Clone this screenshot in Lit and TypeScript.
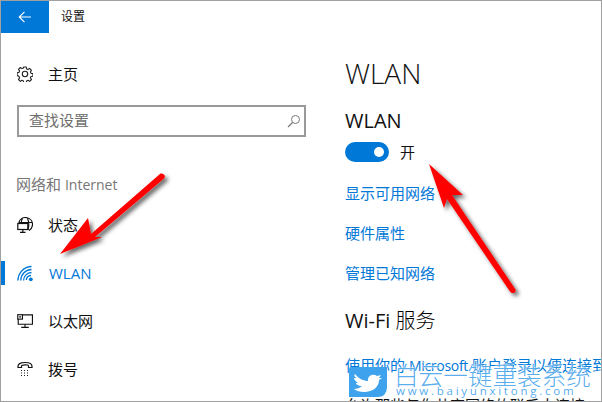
import { LitElement, html, css, svg } from "lit";
import { customElement } from "lit/decorators.js";

const gear = svg`<g fill="none" stroke="#222" stroke-width="1.100"><circle cx="8" cy="8" r="2.700"/><path d="M6.700 1h2.600l.3 1.900 1.400.6 1.600-1.100 1.900 1.900-1.100 1.600.6 1.400 1.900.3v2.600l-1.900.3-.6 1.400 1.100 1.600-1.900 1.900-1.600-1.100-1.400.6-.3 1.900H6.700l-.3-1.900-1.400-.6-1.600 1.100-1.900-1.900 1.100-1.600-.6-1.400L.1 9.300V6.700l1.900-.3.6-1.400-1.100-1.600 1.900-1.900L5 2.600 6.400 2z" stroke-linejoin="round"/></g>`;
const globe = svg`<g fill="none" stroke="#111" stroke-width="1.200"><path d="M2 5A7 7 0 0 1 15.500 8 7 7 0 0 1 12 13.500M1.500 5.500h14M5.500 1.500C4.500 3 4.300 4.500 4.300 6M10.500 1.500C11.800 4 12 9 11 13"/><rect x=".8" y="6.500" width="10" height="6"/><path d="M5.800 12.500v2.500M3 15.300h5.500"/></g>`;
const wifi = svg`<g fill="none" stroke="#0078d7" stroke-width="1.300"><path d="M1 15.500A14 14 0 0 1 14.500 1.500"/><path d="M3.800 15.500A11 11 0 0 1 14.500 4.500"/><path d="M6.600 15.500A8 8 0 0 1 14.500 7.500"/><path d="M9.300 15A5 5 0 0 1 14 10.500"/></g><circle cx="13.800" cy="14.300" r="1.900" fill="#0078d7"/>`;
const eth = svg`<g fill="none" stroke="#111" stroke-width="1.200"><path d="M6 1.500H16.400V11.500H1.300V6"/><rect x=".8" y="1.300" width="5" height="4.700"/><path d="M8.500 11.500v3M4.500 14.800h8"/></g><rect x="2.500" y="2.800" width="1.600" height="1.600" fill="#111"/>`;
const phone = svg`<g fill="none" stroke="#111" stroke-width="1.200"><path d="M1 6.500V5.200C1 3 4 1.500 8 1.500S15 3 15 5.200v1.300h-3.500V5C11.500 4 10 3.800 8 3.800S4.500 4 4.500 5v1.500z"/></g><g fill="#222"><rect x="4" y="9" width="1" height="1"/><rect x="7" y="9" width="1" height="1"/><rect x="10" y="9" width="1" height="1"/><rect x="4" y="11.500" width="1" height="1"/><rect x="7" y="11.500" width="1" height="1"/><rect x="10" y="11.500" width="1" height="1"/><rect x="4" y="14" width="1" height="1"/><rect x="7" y="14" width="1" height="1"/><rect x="10" y="14" width="1" height="1"/></g>`;

@customElement("app-root")
export class AppRoot extends LitElement {
  static styles = css`
    :host { display: block; width: 602px; height: 402px; position: relative; overflow: hidden; background: #fff;
      font-family: "Open Sans", "Noto Sans CJK SC", sans-serif; color: #111; }
    .window { box-sizing: border-box; width: 602px; height: 402px; border: 1px solid #a0a0a0; display: flex; overflow: hidden; background: #fff; }
    .left { width: 344px; flex: none; }
    .bar { display: flex; align-items: center; height: 32px; }
    .back { width: 48px; height: 32px; background: #0078d7; display: flex; align-items: center; justify-content: center; }
    .title { margin-left: 12px; font-size: 12px; margin-bottom: 2px; }
    .row { display: flex; align-items: center; height: 48px; padding-left: 16px; font-size: 15px; position: relative; }
    .row svg { width: 16px; height: 16px; margin-right: 16px; flex: none; }
    .cjk { margin: 0 0 2px -1px; }
    .home { margin-top: 17px; }
    .search { box-sizing: border-box; margin: 7px 39px 0 16px; height: 32px; border: 2px solid #999; display: flex; align-items: center; justify-content: space-between; padding: 0 3px 0 10px; font-size: 15px; color: #6f6f6f; }
    .search span { margin-bottom: 3px; }
    .section { margin: 36px 0 4px 15px; height: 24px; line-height: 22px; font-size: 15px; color: #767676; }
    .section span { font-size: 14px; }
    .active { color: #0078d7; }
    .active::before { content: ""; position: absolute; left: 0; top: 12px; width: 4px; height: 24px; background: #0078d7; }
    .right { flex: 1; min-width: 0; }
    h1 { margin: 49px 0 0; font-weight: 300; font-size: 28px; line-height: 46px; color: #111; }
    h2 { margin: 0; font-weight: 400; font-size: 20px; line-height: 30px; color: #111; }
    .h-wlan { margin-top: 10px; }
    .toggle-row { display: flex; align-items: center; margin-top: 6px; gap: 11px; font-size: 15px; line-height: 20px; }
    .toggle { width: 44px; height: 20px; border-radius: 10px; background: #0078d7; display: flex; align-items: center; justify-content: flex-end; padding-right: 5px; box-sizing: border-box; }
    .knob { width: 10px; height: 10px; border-radius: 50%; background: #fff; }
    .links { margin-top: 11px; display: flex; flex-direction: column; gap: 0; }
    .link { color: #0078d7; font-size: 15px; line-height: 40px; white-space: nowrap; }
    .h-wifi { margin-top: 13px; }
    .h-wifi span { font-weight: 300; color: #000; }
    .para { margin-top: 17px; white-space: nowrap; color: #0078d7; font-size: 15px; line-height: 24px; }
    .para span { font-size: 14px; letter-spacing: -.3px; }
    .para2 { white-space: nowrap; font-size: 15px; line-height: 24px; margin-top: 15px; color: #111; }
    .arrows { position: absolute; inset: 0; width: 602px; height: 402px; pointer-events: none; }
    .mark { position: absolute; left: 349px; top: 367px; display: flex; gap: 7px; }
    .bird { width: 38px; height: 30px; flex: none; display: block; }
    .mark-text { display: flex; flex-direction: column; width: 205px; }
    .big { font-size: 24.600px; line-height: 20px; height: 18px; color: rgba(60, 160, 235, .85); font-weight: 300; white-space: nowrap; margin-top: -1px; text-shadow: 0 0 2px #fff, 0 0 2px #fff; }
    .url { font-size: 11.500px; line-height: 12px; margin: 1px 0 0 2px; color: rgba(60, 160, 235, .9); letter-spacing: 2.750px; white-space: nowrap; }
  `;

  render() {
    return html`
      <div class="window">
        <div class="left">
          <div class="bar">
            <div class="back">
              <svg width="14" height="12" viewBox="0 0 14 12"><path d="M13 6H1.500M6.500 .8L1.200 6l5.300 5.200" fill="none" stroke="#fff" stroke-width="1.100"/></svg>
            </div>
            <div class="title">设置</div>
          </div>
          <div class="row home"><svg viewBox="0 0 16 16">${gear}</svg><span class="cjk">主页</span></div>
          <div class="search"><span>查找设置</span>
            <svg width="14" height="14" viewBox="0 0 14 14"><circle cx="8.500" cy="5.500" r="4" fill="none" stroke="#777" stroke-width="1"/><path d="M5.500 8.500L1 13" stroke="#777" stroke-width="1.200"/></svg>
          </div>
          <div class="section">网络和 <span>Internet</span></div>
          <div class="row"><svg viewBox="0 0 16 16">${globe}</svg><span class="cjk">状态</span></div>
          <div class="row active"><svg viewBox="0 0 16 16">${wifi}</svg>WLAN</div>
          <div class="row"><svg viewBox="0 0 17 16">${eth}</svg><span class="cjk">以太网</span></div>
          <div class="row"><svg viewBox="0 0 16 16">${phone}</svg><span class="cjk">拨号</span></div>
        </div>
        <div class="right">
          <h1>WLAN</h1>
          <h2 class="h-wlan">WLAN</h2>
          <div class="toggle-row"><div class="toggle"><div class="knob"></div></div>开</div>
          <div class="links">
            <div class="link">显示可用网络</div>
            <div class="link">硬件属性</div>
            <div class="link">管理已知网络</div>
          </div>
          <h2 class="h-wifi">Wi-Fi <span>服务</span></h2>
          <div class="para">使用你的 <span>Microsoft</span> 账户登录以便连接到</div>
          <div class="para2">允许那些与你共享网络的联系人连接</div>
        </div>
      </div>
      <svg class="arrows" viewBox="0 0 602 402">
        <defs><filter id="s" x="-20%" y="-20%" width="150%" height="150%"><feDropShadow dx="3" dy="3" stdDeviation="2.200" flood-color="#000" flood-opacity=".6"/></filter></defs>
        <g filter="url(#s)" fill="#fe0000">
          <path d="M60 254L88 218 91 234 160.500 173.500Q163 173 164.500 175Q165.500 177 164 178.500L95 237 102 237z"/>
          <path d="M429 164L463 195 452 195 515.500 289.500Q516 292 514 293Q511.500 293.500 510 291.500L447 199 444 208z"/>
        </g>
      </svg>
      <div class="mark">
        <svg class="bird" viewBox="0 0 38 30"><path d="M0 2Q0 0 2 0H38V20Q38 30 28 30H0z" fill="#3ea3ec"/><path d="M6 7C10 12 15 14 19 14 18 9 24 6 28 9L32 8 30 11 33 11 30 13C30 20 24 25 15 25 11 25 7 24 5 22 8 22 11 21 13 19 9 19 7 17 7 16H9C6 14 5 12 5 11H8C5 10 5 8 6 7z" fill="#fff"/></svg>
        <div class="mark-text">
          <div class="big">白云一键重装系统</div>
          <div class="url">www.baiyunxitong.com</div>
        </div>
      </div>
    `;
  }
}
